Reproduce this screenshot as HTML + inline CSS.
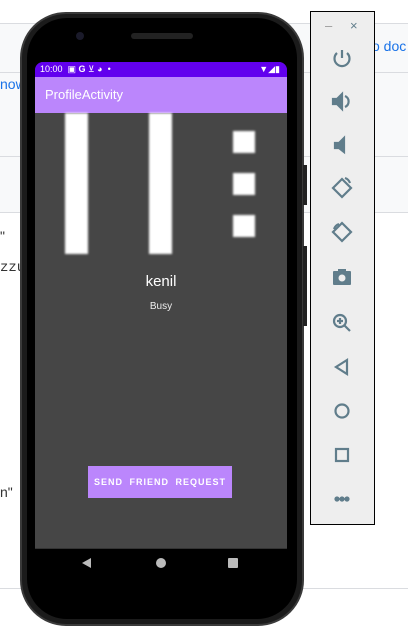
<!DOCTYPE html>
<html><head><style>
*{margin:0;padding:0;box-sizing:border-box}
body{width:408px;height:633px;background:#fff;position:relative;overflow:hidden;font-family:"Liberation Sans",sans-serif}
.a{position:absolute}
</style></head><body>
<div class="a" style="left:0;top:23px;width:408px;height:189px;background:#f8f9fa"></div>
<div class="a" style="left:0;top:23px;width:408px;height:1px;background:#dadce0"></div>
<div class="a" style="left:0;top:72px;width:408px;height:1px;background:#dadce0"></div>
<div class="a" style="left:0;top:156px;width:408px;height:1px;background:#dadce0"></div>
<div class="a" style="left:0;top:212px;width:408px;height:1px;background:#dadce0"></div>
<div class="a" style="left:0;top:588px;width:408px;height:1px;background:#dadce0"></div>
<div class="a" style="left:0;top:76px;font-size:14px;color:#1a73e8">now</div>
<div class="a" style="left:372px;top:38px;font-size:14px;color:#1a73e8">o doc</div>
<div class="a" style="left:0;top:228px;font-size:14px;color:#333">"</div>
<div class="a" style="left:0;top:260px;font-size:14px;color:#333;font-family:'Liberation Mono',monospace">zzu</div>
<div class="a" style="left:0;top:484px;font-size:14px;color:#333">n"</div>
<!-- phone -->
<div class="a" style="left:20px;top:12px;width:284px;height:614px;background:#1b1b1b;border-radius:46px;border:2px solid #3a3a3a"></div>
<div class="a" style="left:27px;top:18px;width:270px;height:601px;background:#000;border-radius:40px"></div>
<div class="a" style="left:76px;top:32px;width:8px;height:8px;border-radius:50%;background:#1a1a2a"></div>
<div class="a" style="left:131px;top:33px;width:62px;height:6px;border-radius:3px;background:#222"></div>
<div class="a" style="left:303px;top:165px;width:4px;height:40px;background:#222"></div>
<div class="a" style="left:303px;top:246px;width:4px;height:80px;background:#222"></div>
<!-- screen -->
<div class="a" style="left:35px;top:62px;width:252px;height:486px;background:#464646;border-radius:8px 8px 0 0;overflow:hidden">
 <div class="a" style="left:0;top:0;width:252px;height:15px;background:#6200ee;color:#fff;font-size:9px;line-height:15px;padding-left:5px">10:00 &nbsp;▣ <b>G</b> ⊻ ◕ &nbsp;•<span style="position:absolute;right:7px">▼◢▮</span></div>
 <div class="a" style="left:0;top:15px;width:252px;height:36px;background:#bb86fc;color:#fff;font-size:13px;line-height:36px;padding-left:10px">ProfileActivity</div>
 <div class="a" style="left:30px;top:51px;width:23px;height:141px;background:#fff;filter:blur(1px)"></div>
 <div class="a" style="left:114px;top:51px;width:23px;height:141px;background:#fff;filter:blur(1px)"></div>
 <div class="a" style="left:198px;top:69px;width:22px;height:22px;background:#fff;filter:blur(1px)"></div>
 <div class="a" style="left:198px;top:111px;width:22px;height:22px;background:#fff;filter:blur(1px)"></div>
 <div class="a" style="left:198px;top:153px;width:22px;height:22px;background:#fff;filter:blur(1px)"></div>
 <div class="a" style="left:0;top:211px;width:252px;text-align:center;color:#fff;font-size:15px">kenil</div>
 <div class="a" style="left:0;top:239px;width:252px;text-align:center;color:#eee;font-size:10px">Busy</div>
 <div class="a" style="left:53px;top:404px;width:144px;height:32px;background:#bb86fc;color:#fff;font-size:9px;font-weight:bold;letter-spacing:1px;word-spacing:3px;line-height:32px;text-align:center;white-space:nowrap">SEND FRIEND REQUEST</div>
</div>
<div class="a" style="left:35px;top:548px;width:252px;height:1px;background:#333"></div>
<div class="a" style="left:82px;top:558px;width:0;height:0;border-top:5px solid transparent;border-bottom:5px solid transparent;border-right:9px solid #bbb"></div>
<div class="a" style="left:156px;top:558px;width:10px;height:10px;border-radius:50%;background:#bbb"></div>
<div class="a" style="left:228px;top:558px;width:10px;height:10px;background:#bbb;border-radius:1px"></div>
<!-- toolbar -->
<div class="a" style="left:310px;top:11px;width:65px;height:514px;background:#eee;border:1px solid #000"></div>
<div class="a" style="left:325px;top:18px;color:#999;font-size:13px">–</div>
<div class="a" style="left:350px;top:18px;color:#607d8b;font-size:13px">×</div>
<svg class="a" style="left:330px;top:45px" width="24" height="470" viewBox="0 0 24 470" fill="none" stroke="#607d8b" stroke-width="2.2">
 <path d="M12 5v8M7 8a7.5 7.5 0 1 0 10 0"/>
 <path d="M3 54h4l5-5v15l-5-5H3z" fill="#607d8b"/><path d="M15 51a6 6 0 0 1 0 11"/>
 <path d="M5 98h4l5-5v14l-5-4H5z" fill="#607d8b"/>
 <path d="M3 143l9-9 9 9-9 9z"/><path d="M15 133a8 8 0 0 1 5 5"/>
 <path d="M3 187l9-9 9 9-9 9z"/><path d="M4 184a8 8 0 0 1 5-5"/>
 <rect x="3" y="226" width="18" height="14" rx="1" fill="#607d8b" stroke="none"/><rect x="8" y="224" width="8" height="3" fill="#607d8b" stroke="none"/><circle cx="12" cy="233" r="3.5" fill="#eee" stroke="none"/>
 <circle cx="10" cy="276" r="6"/><path d="M14 280l6 6M10 273v6M7 276h6"/>
 <path d="M17 315l-11 7 11 7z"/>
 <circle cx="12" cy="366" r="6.5"/>
 <rect x="6" y="404" width="12" height="12"/>
 <circle cx="7" cy="454" r="1.5" fill="#607d8b"/><circle cx="12" cy="454" r="1.5" fill="#607d8b"/><circle cx="17" cy="454" r="1.5" fill="#607d8b"/>
</svg>
</body></html>
